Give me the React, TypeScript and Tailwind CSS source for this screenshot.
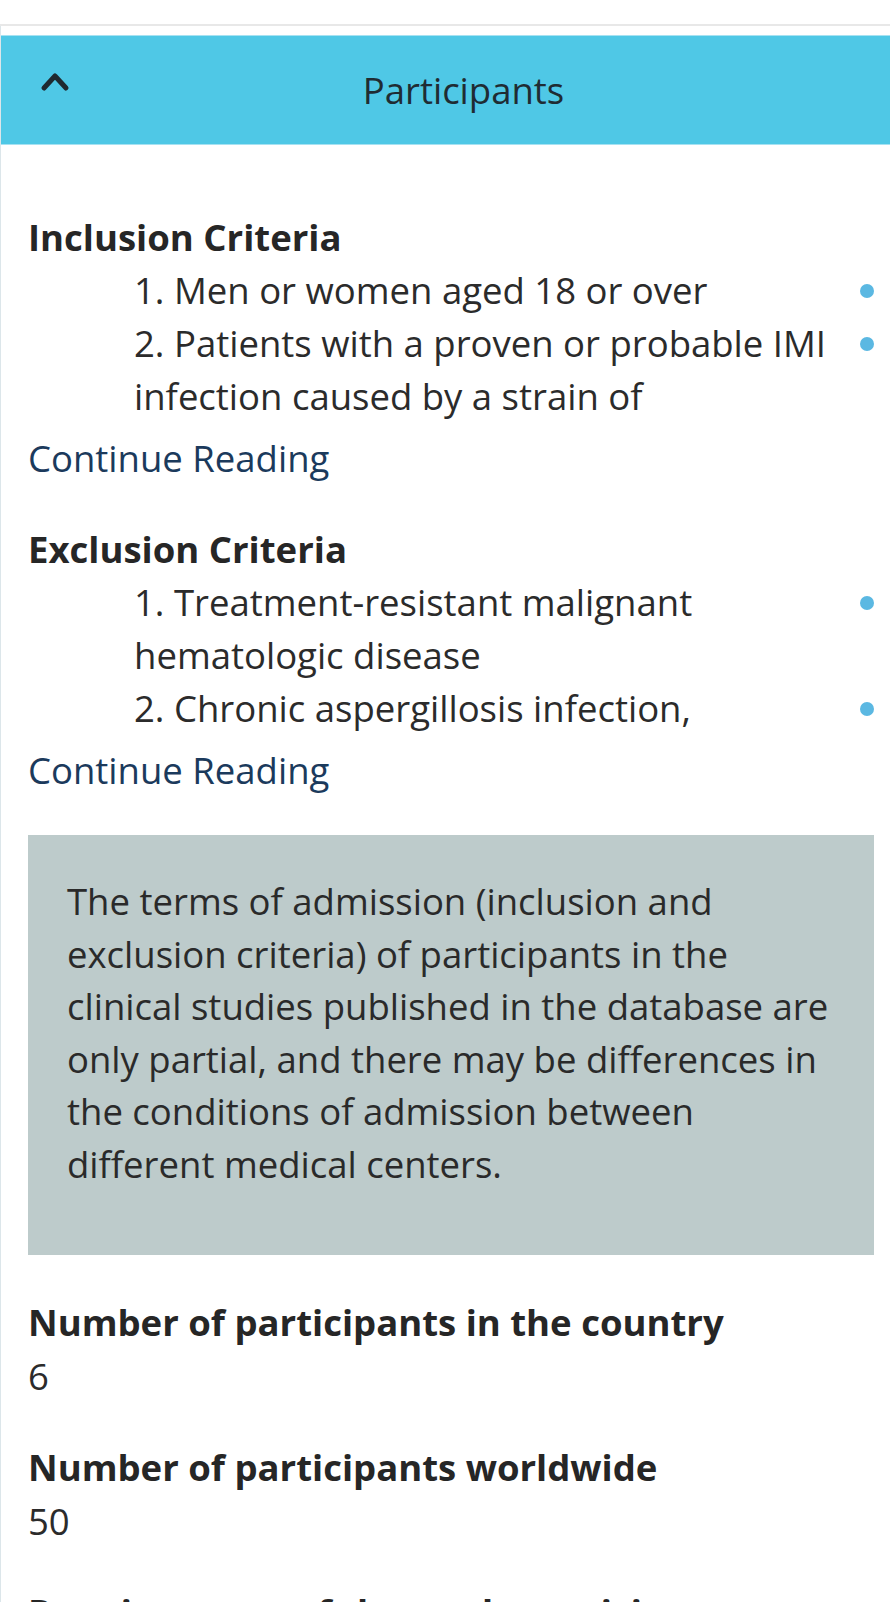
const inclusion = [
  '1. Men or women aged 18 or over',
  '2. Patients with a proven or probable IMI infection caused by a strain of',
];

const exclusion = [
  '1. Treatment-resistant malignant hematologic disease',
  '2. Chronic aspergillosis infection,',
];

function CriteriaList({ items }: { items: string[] }) {
  return (
    <ul className="pl-[106px]">
      {items.map((t) => (
        <li key={t} className="flex">
          <span className="flex-1 pr-[18px]">{t}</span>
          <span className="w-[16px] h-[53px] flex items-center justify-end shrink-0">
            <span className="w-[14px] h-[14px] rounded-full bg-[#5bb8e2]" />
          </span>
        </li>
      ))}
    </ul>
  );
}

function Criteria({ title, items }: { title: string; items: string[] }) {
  return (
    <section>
      <h3 className="font-bold text-[#262626]">{title}</h3>
      <CriteriaList items={items} />
      <a className="block mt-[9px] text-[#1b3a5c]">Continue Reading</a>
    </section>
  );
}

function Stat({ label, value }: { label: string; value: string }) {
  return (
    <div>
      <h3 className="font-bold text-[#262626]">{label}</h3>
      <p>{value}</p>
    </div>
  );
}

export default function App() {
  return (
    <div
      className="w-[890px] h-[1602px] overflow-hidden bg-white text-[36.5px] leading-[53px] text-[#2b2b2b]"
      style={{ fontFamily: '"Open Sans", "Noto Sans", sans-serif' }}
    >
      <div className="h-[24px]" />
      <div className="border-t-2 border-[#e8e8e8]">
        <div className="border-l border-[#dce6ea] pt-[9px]">
          <div className="relative h-[110px] bg-[#4fc8e6] border-y border-[#a6e2f2] flex items-center">
            <svg
              className="absolute left-[39px] top-[35px]"
              width="30"
              height="22"
              viewBox="0 0 30 22"
            >
              <polyline
                points="4,17 15,5 26,17"
                fill="none"
                stroke="#1f2a30"
                strokeWidth="5"
                strokeLinecap="round"
                strokeLinejoin="round"
              />
            </svg>
            <h2 className="flex-1 text-center pl-[36px] text-[#1f2c33]">Participants</h2>
          </div>

          <div className="pl-[27px] pr-[16px] pt-[66px]">
            <div className="flex flex-col gap-[38px]">
              <Criteria title="Inclusion Criteria" items={inclusion} />
              <Criteria title="Exclusion Criteria" items={exclusion} />

              <div className="bg-[#bdcbcb] pl-[39px] pr-[34px] pt-[40px] pb-[64px] leading-[52.6px] text-[#2a2a2a]">
                The terms of admission (inclusion and exclusion criteria) of participants in the
                clinical studies published in the database are only partial, and there may be
                differences in the conditions of admission between different medical centers.
              </div>
            </div>

            <div className="flex flex-col gap-[37px] mt-[40px] leading-[54px]">
              <Stat label="Number of participants in the country" value="6" />
              <Stat label="Number of participants worldwide" value="50" />
              <Stat label="Requirements of the study participants" value="" />
            </div>
          </div>
        </div>
      </div>
    </div>
  );
}
